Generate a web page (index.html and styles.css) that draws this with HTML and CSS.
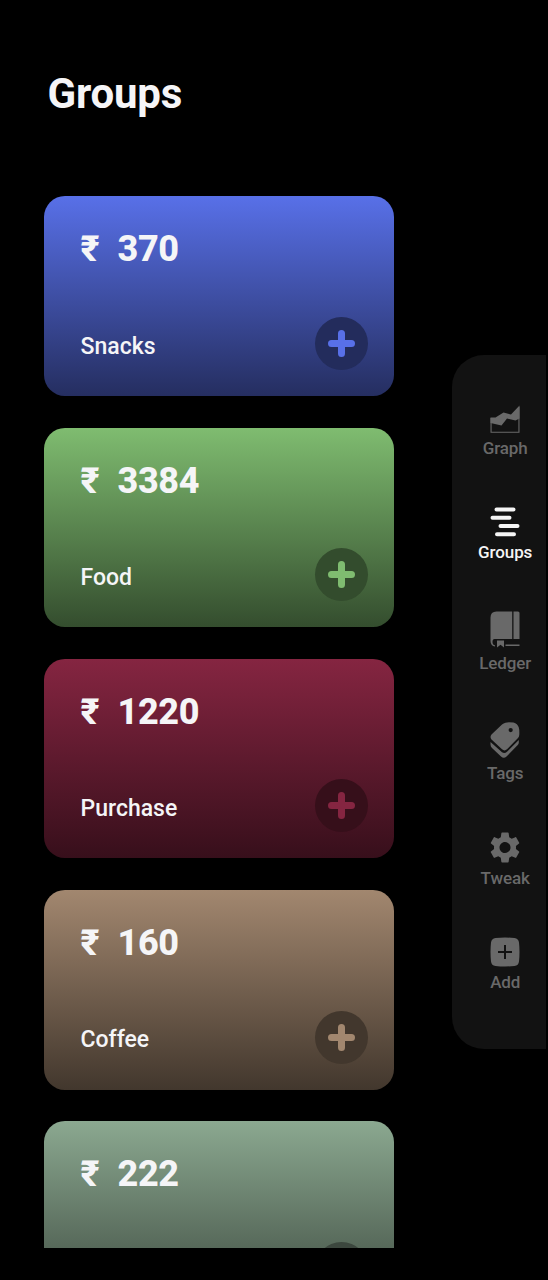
FILE: index.html
```html
<!DOCTYPE html>
<html lang="en">
<head>
<meta charset="utf-8">
<title>Groups</title>
<link rel="stylesheet" href="styles.css">
</head>
<body>
<div class="screen">
  <main class="content">
    <h1 class="title">Groups</h1>
    <div class="list">
      <section class="card snacks">
        <div class="amount"><span class="currency">₹</span><span>370</span></div>
        <div class="row"><span class="name">Snacks</span><button class="add" aria-label="Add"><svg viewBox="0 0 27 27"><path d="M13.500 3.500v20M3.500 13.500h20"/></svg></button></div>
      </section>
      <section class="card food">
        <div class="amount"><span class="currency">₹</span><span>3384</span></div>
        <div class="row"><span class="name">Food</span><button class="add" aria-label="Add"><svg viewBox="0 0 27 27"><path d="M13.500 3.500v20M3.500 13.500h20"/></svg></button></div>
      </section>
      <section class="card purchase">
        <div class="amount"><span class="currency">₹</span><span>1220</span></div>
        <div class="row"><span class="name">Purchase</span><button class="add" aria-label="Add"><svg viewBox="0 0 27 27"><path d="M13.500 3.500v20M3.500 13.500h20"/></svg></button></div>
      </section>
      <section class="card coffee">
        <div class="amount"><span class="currency">₹</span><span>160</span></div>
        <div class="row"><span class="name">Coffee</span><button class="add" aria-label="Add"><svg viewBox="0 0 27 27"><path d="M13.500 3.500v20M3.500 13.500h20"/></svg></button></div>
      </section>
      <section class="card sage">
        <div class="amount"><span class="currency">₹</span><span>222</span></div>
        <div class="row"><span class="name"></span><button class="add" aria-label="Add"><svg viewBox="0 0 27 27"><path d="M13.500 3.500v20M3.500 13.500h20"/></svg></button></div>
      </section>
    </div>
  </main>
  <nav class="nav">
    <a class="item">
      <svg width="30" height="28" viewBox="0 0 30 28"><path fill="currentColor" d="M.5 12.500H5.500L13.500 7.500L21 9.500L29.500.5V13.500L25.500 15.500L17 13.500L11.500 20.500L.5 18z"/><path fill="none" stroke="currentColor" stroke-width="1.100" d="M1.050 13V27.200H28.950V2"/></svg>
      <span>Graph</span>
    </a>
    <a class="item active">
      <svg width="30" height="30" viewBox="0 0 30 30"><path fill="none" stroke="currentColor" stroke-width="4" stroke-linecap="round" d="M6.500 2.500H23.500M2.500 10.800H19.500M10.500 19H27.500M7 27.300H24"/></svg>
      <span>Groups</span>
    </a>
    <a class="item">
      <svg width="30" height="37" viewBox="0 0 30 37"><path fill="currentColor" d="M6.500.5H22.200V28H4.500Q2.500 28 2.500 31Q2.500 34 5 34.300V35.500Q.5 34.800.5 30V6.500Q.5.5 6.500.5zM23.500.5H28Q29.500.5 29.500 2V28H23.500zM7 29.500H14V36.500L10.500 33.800L7 36.500zM15.500 33.500H29.500V35H15.500z"/></svg>
      <span>Ledger</span>
    </a>
    <a class="item">
      <svg width="30" height="36" viewBox="0 0 30 36"><path fill="currentColor" fill-rule="evenodd" d="M15.500.8Q17 .2 19 .2L23.500.5Q27.500 1.500 28.800 5.500Q29.500 8 29.300 12.500Q29.300 14.500 28 16L17 27.300Q14.500 29.500 12 27.300L1.500 17.500Q-.5 15 1.500 12.500L12 2.500Q13.500 1.200 15.500.8zM20.700 6A2.100 2.100 0 1 0 20.700 10.200A2.100 2.100 0 0 0 20.700 6z"/><path fill="currentColor" d="M.5 20L12 30.200Q14.500 32 17 29.800L28.800 18V20.500Q28.800 22 27.500 23.200L16.500 34.600Q13.800 37 11 34.600L2 26Q.5 24.500.5 22.500z"/></svg>
      <span>Tags</span>
    </a>
    <a class="item">
      <svg width="30" height="31" viewBox="2.200 2 19.600 20" preserveAspectRatio="none"><path fill="currentColor" d="M19.140 12.940c.04-.3.060-.61.060-.94 0-.32-.02-.64-.07-.94l2.030-1.580c.18-.14.230-.41.120-.61l-1.920-3.320c-.12-.22-.37-.29-.59-.22l-2.390.96c-.5-.38-1.030-.7-1.620-.94l-.36-2.540c-.04-.24-.24-.41-.48-.41h-3.840c-.24 0-.43.17-.47.41l-.36 2.540c-.59.24-1.130.57-1.620.94l-2.390-.96c-.22-.08-.47 0-.59.22L2.740 8.870c-.12.21-.08.47.12.61l2.030 1.580c-.05.3-.09.63-.09.94s.02.64.07.94l-2.030 1.580c-.18.14-.23.41-.12.61l1.920 3.320c.12.22.37.29.59.22l2.390-.96c.5.38 1.030.7 1.620.94l.36 2.540c.05.24.24.41.48.41h3.840c.24 0 .44-.17.47-.41l.36-2.540c.59-.24 1.130-.56 1.620-.94l2.390.96c.22.08.47 0 .59-.22l1.920-3.320c.12-.22.070-.47-.12-.61l-2.010-1.580zM12 15.600c-1.980 0-3.600-1.620-3.600-3.600s1.620-3.600 3.600-3.600 3.600 1.620 3.600 3.600-1.620 3.600-3.600 3.600z"/></svg>
      <span>Tweak</span>
    </a>
    <a class="item">
      <svg width="30" height="30" viewBox="0 0 30 30"><path fill="currentColor" fill-rule="evenodd" d="M5.500 1Q15 0 24.500 1Q28.500 1.500 29 5.500Q30 15 29 24.500Q28.500 28.500 24.500 29Q15 30 5.500 29Q1.500 28.500 1 24.500Q0 15 1 5.500Q1.500 1.500 5.500 1zM14 8V14H8V16H14V22H16V16H22V14H16V8z"/></svg>
      <span>Add</span>
    </a>
  </nav>
</div>
</body>
</html>
```
FILE: styles.css
```css
* { box-sizing: border-box; }
body {
  margin: 0;
  background: #000;
  color: #f5f5f7;
  font-family: Roboto, "Noto Sans", sans-serif;
}
.screen {
  display: flex;
  justify-content: space-between;
  width: 548px;
  height: 1280px;
  padding-right: 2px;
  overflow: hidden;
}
.content {
  display: flex;
  flex-direction: column;
  width: 393.700px;
  height: 1248.300px;
  padding: 69px 0 0 44px;
}
.title {
  margin: 0 0 78.400px 3.500px;
  font-size: 42px;
  line-height: 49px;
  font-weight: 700;
  letter-spacing: -0.200px;
}
.list {
  display: flex;
  flex-direction: column;
  gap: 31.500px;
  flex: 1;
  min-height: 0;
  overflow: hidden;
}
.card {
  display: flex;
  flex-direction: column;
  justify-content: space-between;
  flex: none;
  height: 199.700px;
  padding: 32px 26px 26px 36.500px;
  border-radius: 21px;
  background: linear-gradient(var(--top), var(--bottom));
}
.snacks { --top: #5870e8; --bottom: #252e60; --dark: #232c5c; }
.food { --top: #7fbc70; --bottom: #344d2e; --dark: #334c2d; }
.purchase { --top: #852541; --bottom: #370f1b; --dark: #360f1a; }
.coffee { --top: #a2876f; --bottom: #42372d; --dark: #42372d; }
.sage { --top: #8ba890; --bottom: #39453b; --dark: #3c473e; }
.amount {
  display: flex;
  gap: 17px;
  font-size: 36px;
  line-height: 42px;
  font-weight: 800;
  letter-spacing: -0.350px;
}
.currency { width: 20px; }
.row {
  display: flex;
  align-items: center;
  justify-content: space-between;
}
.name {
  padding-top: 6px;
  font-size: 23px;
  line-height: 28px;
  font-weight: 500;
}
.add {
  display: grid;
  place-items: center;
  width: 53px;
  height: 53px;
  padding: 0;
  border: 0;
  border-radius: 50%;
  background: var(--dark);
}
.add svg { width: 27px; height: 27px; }
.add path {
  fill: none;
  stroke: var(--top);
  stroke-width: 7;
  stroke-linecap: round;
}
.nav {
  display: flex;
  flex-direction: column;
  gap: 48px;
  width: 94px;
  height: 693.500px;
  margin-top: 355.300px;
  padding: 49.400px 0 0 12.400px;
  border-radius: 32px 0 0 32px;
  background: #121212;
}
.item {
  display: flex;
  flex-direction: column;
  align-items: center;
  gap: 5.700px;
  color: #696969;
  font-size: 17px;
  line-height: 20.300px;
  font-weight: 500;
  letter-spacing: -0.100px;
}
.item svg { display: block; }
.active { color: #f5f5f5; }
```
